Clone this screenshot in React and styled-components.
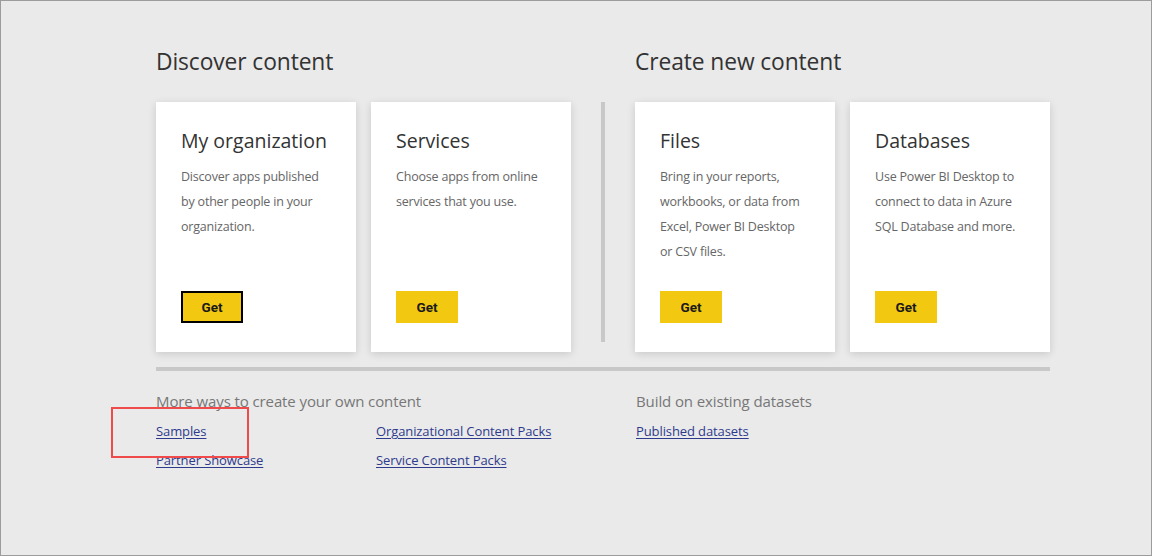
import styled, { createGlobalStyle } from "styled-components"

const GlobalStyle = createGlobalStyle`
    html, body {
        margin: 0;
        padding: 0;
        background: #eaeaea;
    }
    * {
        box-sizing: border-box;
    }
`

const Frame = styled.div`
    position: relative;
    width: 1152px;
    height: 556px;
    border: 1px solid #9c9c9c;
    background-color: #eaeaea;
    font-family: "Open Sans", "Liberation Sans", sans-serif;
    padding: 46px 0 0 155px;
    overflow: hidden;
`

const Sections = styled.div`
    display: flex;
    align-items: flex-start;
`

const Section = styled.div`
    display: flex;
    flex-direction: column;
`

const Heading = styled.h1`
    margin: 0 0 26px 0;
    font-size: 22.8px;
    font-weight: 400;
    line-height: 29px;
    color: #333;
    letter-spacing: -0.1px;
`

const Cards = styled.div`
    display: flex;
    gap: 15px;
`

const Card = styled.div`
    display: flex;
    flex-direction: column;
    width: 200px;
    height: 250px;
    background-color: #fff;
    box-shadow: 0 2px 8px rgba(0, 0, 0, 0.14);
    padding: 26px 28px 29px 25px;
`

const CardTitle = styled.h2`
    margin: 0;
    font-size: 19.5px;
    font-weight: 400;
    line-height: 26px;
    color: #333;
`

const CardText = styled.p`
    margin: 10px 0 0 0;
    font-size: 12.5px;
    line-height: 25px;
    color: #666;
    letter-spacing: -0.2px;
`

const GetButton = styled.button`
    margin-top: auto;
    width: 62px;
    height: 32px;
    background-color: #f2c811;
    border: ${(p) => (p.$focused ? "2px solid #000" : "none")};
    font-family: Roboto, "Liberation Sans", sans-serif;
    font-size: 13.5px;
    font-weight: 700;
    color: #1a1a1a;
    padding: 0;
    cursor: pointer;
`

const VerticalDivider = styled.div`
    width: 4px;
    height: 240px;
    margin: 55px 30px 0 30px;
    background-color: #c8c8c8;
`

const Rule = styled.div`
    width: 894px;
    height: 4px;
    margin-top: 15px;
    background-color: #c8c8c8;
`

const More = styled.div`
    display: grid;
    grid-template-columns: 220px 260px auto;
    margin-top: 19px;
`

const Column = styled.div`
    display: flex;
    flex-direction: column;
`

const MoreTitle = styled.div`
    font-size: 15px;
    line-height: 22px;
    margin-bottom: 5px;
    color: #777;
    white-space: nowrap;
    letter-spacing: -0.1px;
`

const Link = styled.a`
    font-size: 13px;
    line-height: 29px;
    color: #2e3a8c;
    text-decoration: underline;
    text-underline-offset: 2px;
    white-space: nowrap;
    letter-spacing: -0.1px;
    align-self: flex-start;
`

const Spacer = styled.div`
    height: 27px;
`

const Highlight = styled.div`
    position: absolute;
    left: 110px;
    top: 406px;
    width: 138px;
    height: 51px;
    border: 2px solid #f04a4a;
    pointer-events: none;
`

const discover = [
    { title: "My organization", text: "Discover apps published by other people in your organization.", focused: true },
    { title: "Services", text: "Choose apps from online services that you use." },
]

const create = [
    { title: "Files", text: "Bring in your reports, workbooks, or data from Excel, Power BI Desktop or CSV files." },
    { title: "Databases", text: "Use Power BI Desktop to connect to data in Azure SQL Database and more." },
]

function ContentCard({ item }) {
    return (
        <Card>
            <CardTitle>{item.title}</CardTitle>
            <CardText>{item.text}</CardText>
            <GetButton $focused={item.focused}>Get</GetButton>
        </Card>
    )
}

export default function App() {
    return (
        <Frame>
            <GlobalStyle />
            <Sections>
                <Section>
                    <Heading>Discover content</Heading>
                    <Cards>
                        {discover.map((item) => (
                            <ContentCard key={item.title} item={item} />
                        ))}
                    </Cards>
                </Section>
                <VerticalDivider />
                <Section>
                    <Heading>Create new content</Heading>
                    <Cards>
                        {create.map((item) => (
                            <ContentCard key={item.title} item={item} />
                        ))}
                    </Cards>
                </Section>
            </Sections>
            <Rule />
            <More>
                <Column>
                    <MoreTitle>More ways to create your own content</MoreTitle>
                    <Link href="#">Samples</Link>
                    <Link href="#">Partner Showcase</Link>
                </Column>
                <Column>
                    <Spacer />
                    <Link href="#">Organizational Content Packs</Link>
                    <Link href="#">Service Content Packs</Link>
                </Column>
                <Column>
                    <MoreTitle>Build on existing datasets</MoreTitle>
                    <Link href="#">Published datasets</Link>
                </Column>
            </More>
            <Highlight />
        </Frame>
    )
}
